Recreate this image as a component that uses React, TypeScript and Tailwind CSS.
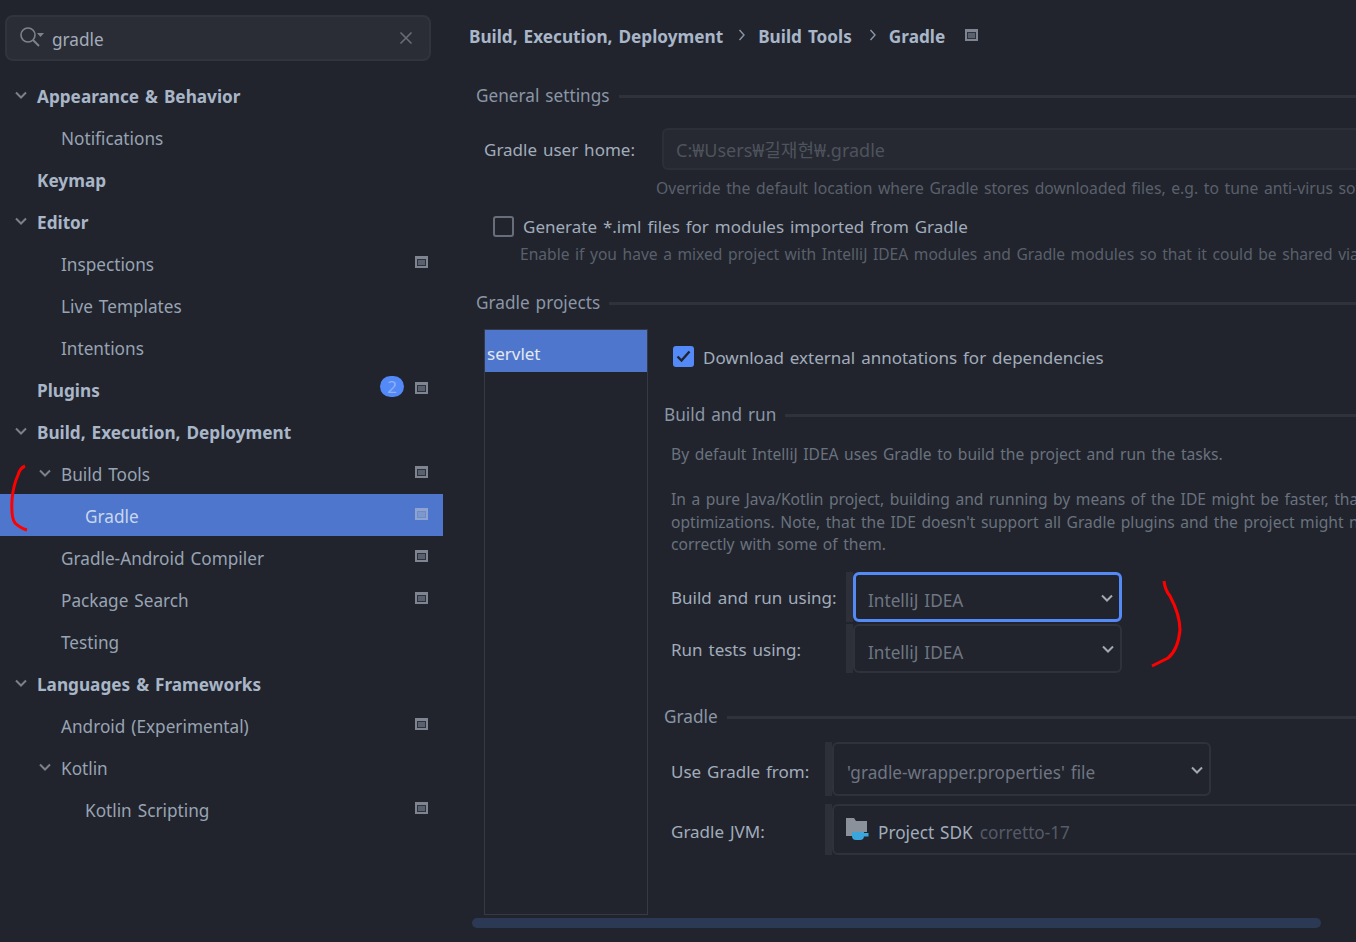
import React from "react";

const FONT = '"Noto Sans", "Noto Sans CJK KR", sans-serif';

function Chevron({ className = "" }: { className?: string }) {
  return (
    <svg width="14" height="14" viewBox="0 0 14 14" fill="none" className={className}>
      <path d="M2 4.5 L7 9.5 L12 4.5" stroke="currentColor" strokeWidth="2" />
    </svg>
  );
}

function Win({ dim = false }: { dim?: boolean }) {
  return (
    <div className={`w-[13px] h-[12px] border-2 border-t-[3px] ${dim ? "border-[#8ea3cf]" : "border-[#7f8590]"}`}>
      <div className={`w-full h-full border ${dim ? "bg-[#7d97cf] border-[#6c8bcb]" : "bg-[#596170] border-[#2e323b]"}`} />
    </div>
  );
}

type Row = { t: string; lvl: number; bold?: boolean; open?: boolean; win?: boolean; sel?: boolean; badge?: boolean };

const rows: Row[] = [
  { t: "Appearance & Behavior", lvl: 0, bold: true, open: true },
  { t: "Notifications", lvl: 1 },
  { t: "Keymap", lvl: 0, bold: true },
  { t: "Editor", lvl: 0, bold: true, open: true },
  { t: "Inspections", lvl: 1, win: true },
  { t: "Live Templates", lvl: 1 },
  { t: "Intentions", lvl: 1 },
  { t: "Plugins", lvl: 0, bold: true, win: true, badge: true },
  { t: "Build, Execution, Deployment", lvl: 0, bold: true, open: true },
  { t: "Build Tools", lvl: 1, open: true, win: true },
  { t: "Gradle", lvl: 2, win: true, sel: true },
  { t: "Gradle-Android Compiler", lvl: 1, win: true },
  { t: "Package Search", lvl: 1, win: true },
  { t: "Testing", lvl: 1 },
  { t: "Languages & Frameworks", lvl: 0, bold: true, open: true },
  { t: "Android (Experimental)", lvl: 1, win: true },
  { t: "Kotlin", lvl: 1, open: true },
  { t: "Kotlin Scripting", lvl: 2, win: true },
];

const indent = ["pl-[37px]", "pl-[61px]", "pl-[85px]"];
const chevPos = ["left-[14px]", "left-[38px]", "left-[62px]"];

function SideRow({ r }: { r: Row }) {
  return (
    <div
      className={`relative h-[42px] flex items-center pr-[15px] ${indent[r.lvl]} ${r.sel ? "bg-[#4e76cc]" : ""}`}
    >
      {r.open && <Chevron className={`absolute top-[14px] text-[#7b808a] ${chevPos[r.lvl]}`} />}
      <span
        className={`flex-1 text-[17.2px] leading-[24px] pt-[4px] whitespace-nowrap ${
          r.bold ? "font-bold text-[#a9b6c8]" : r.sel ? "text-[#c9d6ee]" : "text-[#98a3b3]"
        }`}
      >
        {r.t}
      </span>
      {r.badge && (
        <div className="w-[24px] h-[21px] mr-[11px] mb-[6px] rounded-full bg-[#548af7] text-[#8fb2f5] text-[17px] leading-[21px] text-center">
          2
        </div>
      )}
      {r.win && (
        <div className="mb-[3px]">
          <Win dim={r.sel} />
        </div>
      )}
    </div>
  );
}

function Header({ title, className = "" }: { title: string; className?: string }) {
  return (
    <div className={`flex items-center gap-[9px] h-[24px] whitespace-nowrap ${className}`}>
      <span className="text-[17.2px] leading-[24px] text-[#8b96a6] -mt-[2px]">{title}</span>
      <div className="flex-1 h-[3px] bg-[#2f323a] -mt-[1px]" />
    </div>
  );
}

function Combo({ text, w, h, focus = false }: { text: string; w: string; h: string; focus?: boolean }) {
  return (
    <div className="flex">
      <div className="w-[7px] bg-[#2d3038]" />
      <div
        className={`${w} ${h} flex items-center justify-between pr-[5px] rounded-[6px] ${
          focus ? "border-[3px] border-[#548af7] pl-[12px]" : "border-2 border-[#2f323a] pl-[13px]"
        }`}
      >
        <span className="text-[17.2px] text-[#6f7682] pt-[9px] whitespace-nowrap">{text}</span>
        <Chevron className="text-[#a3a9b3] mt-[2px]" />
      </div>
    </div>
  );
}

export default function App() {
  return (
    <div
      className="relative w-[1356px] h-[942px] overflow-hidden flex bg-[#21242d] [word-spacing:1.5px]"
      style={{ fontFamily: FONT }}
    >
      {/* sidebar */}
      <aside className="w-[443px] shrink-0">
        <div className="mx-[5px] mt-[15px] mb-[13px] w-[426px] h-[46px] rounded-[8px] bg-[#2a2d36] border-2 border-[#30343d] flex items-center pl-[12px] pr-[16px]">
          <svg width="26" height="24" viewBox="0 0 26 24" fill="none" className="text-[#7d838d]">
            <circle cx="9" cy="9" r="7" stroke="currentColor" strokeWidth="1.6" />
            <path d="M14 14 L20 20" stroke="currentColor" strokeWidth="2" />
            <path d="M18 7 H25 L21.5 11 Z" fill="currentColor" />
          </svg>
          <span className="flex-1 ml-[7px] text-[17.2px] text-[#a3acba] pt-[4px]">gradle</span>
          <svg width="14" height="14" viewBox="0 0 14 14" fill="none" className="text-[#686d77]">
            <path d="M1.5 1.5 L12.5 12.5 M12.5 1.5 L1.5 12.5" stroke="currentColor" strokeWidth="1.6" />
          </svg>
        </div>
        {rows.map((r) => (
          <SideRow key={r.t} r={r} />
        ))}
      </aside>

      {/* main */}
      <main className="flex-1 min-w-0 overflow-hidden relative">
        <div className="pl-[26px] pt-[26px] flex items-center h-[48px] whitespace-nowrap font-bold text-[17.2px] text-[#a9b6c8]">
          <span>Build, Execution, Deployment</span>
          <svg width="8" height="12" viewBox="0 0 8 12" fill="none" className="ml-[15px] mr-[12px] -mt-[5px] text-[#8b96a6]">
            <path d="M1.5 1 L6 6 L1.5 11" stroke="currentColor" strokeWidth="1.4" />
          </svg>
          <span>Build Tools</span>
          <svg width="8" height="12" viewBox="0 0 8 12" fill="none" className="ml-[17px] mr-[12px] -mt-[5px] text-[#8b96a6]">
            <path d="M1.5 1 L6 6 L1.5 11" stroke="currentColor" strokeWidth="1.4" />
          </svg>
          <span>Gradle</span>
          <div className="ml-[20px] -mt-[4px]">
            <Win />
          </div>
        </div>

        <div className="pl-[33px] w-[1100px]">
          <Header title="General settings" className="mt-[37px]" />
          <div className="mt-[19px] pl-[8px] flex items-center h-[42px]">
            <span className="w-[178px] text-[17px] text-[#a1acbb] pt-[2px] whitespace-nowrap">Gradle user home:</span>
            <div className="flex-1 h-[42px] rounded-[6px] bg-[#262931] border-2 border-[#2c2f37] pl-[12px] flex items-center text-[18px] text-[#4e535d] pt-[3px] whitespace-nowrap">
              C:₩Users₩길재현₩.gradle
            </div>
          </div>
          <p className="mt-[6px] ml-[180px] h-[24px] text-[15.7px] leading-[24px] text-[#5a606b] whitespace-nowrap">
            Override the default location where Gradle stores downloaded files, e.g. to tune anti-virus software
          </p>
          <div className="mt-[15px] ml-[17px] flex items-center h-[24px]">
            <div className="w-[21px] h-[21px] rounded-[3px] border-2 border-[#686e79] -mt-[2px]" />
            <span className="ml-[9px] text-[17px] text-[#a1acbb] whitespace-nowrap">
              Generate *.iml files for modules imported from Gradle
            </span>
          </div>
          <p className="mt-[3px] ml-[44px] h-[24px] text-[15.6px] leading-[24px] text-[#5a606b] whitespace-nowrap">
            Enable if you have a mixed project with IntelliJ IDEA modules and Gradle modules so that it could be shared via VCS
          </p>
          <Header title="Gradle projects" className="mt-[26px]" />

          <div className="mt-[13px] ml-[8px] flex">
            <div className="w-[164px] h-[586px] shrink-0 border border-[#363a44]">
              <div className="h-[42px] pl-[2px] bg-[#4e76cc] text-[17px] text-[#e3e8f2] flex items-center pt-[6px]">
                servlet
              </div>
            </div>

            <div className="flex-1 pl-[16px]">
              <div className="mt-[16px] ml-[9px] flex items-center h-[24px]">
                <div className="w-[21px] h-[21px] rounded-[3px] bg-[#548af7] flex items-center justify-center -mt-[2px]">
                  <svg width="15" height="13" viewBox="0 0 15 13" fill="none">
                    <path d="M1.5 6.5 L5.5 10.5 L13.5 1.5" stroke="#21242d" strokeWidth="2.4" />
                  </svg>
                </div>
                <span className="ml-[9px] text-[17px] text-[#a1acbb] pt-[2px] whitespace-nowrap">
                  Download external annotations for dependencies
                </span>
              </div>
              <Header title="Build and run" className="mt-[35px]" />
              <div className="mt-[15px] ml-[7px] text-[15.6px] leading-[22.5px] text-[#6a727e] whitespace-nowrap">
                <p>By default IntelliJ IDEA uses Gradle to build the project and run the tasks.</p>
                <p className="mt-[22.5px]">In a pure Java/Kotlin project, building and running by means of the IDE might be faster, thanks to</p>
                <p>optimizations. Note, that the IDE doesn't support all Gradle plugins and the project might not work</p>
                <p>correctly with some of them.</p>
              </div>

              <div className="mt-[16px] ml-[7px] flex items-center">
                <span className="w-[175px] text-[17px] text-[#a1acbb] pt-[3px] whitespace-nowrap">Build and run using:</span>
                <Combo text="IntelliJ IDEA" w="w-[269px]" h="h-[50px]" focus />
              </div>
              <div className="mt-[2px] ml-[7px] flex items-center">
                <span className="w-[175px] text-[17px] text-[#a1acbb] pt-[3px] whitespace-nowrap">Run tests using:</span>
                <Combo text="IntelliJ IDEA" w="w-[269px]" h="h-[49px]" />
              </div>

              <Header title="Gradle" className="mt-[33px]" />
              <div className="mt-[12px] ml-[7px] flex items-center">
                <span className="w-[154px] text-[17px] text-[#a1acbb] pt-[7px] whitespace-nowrap">Use Gradle from:</span>
                <Combo text="'gradle-wrapper.properties' file" w="w-[379px]" h="h-[54px]" />
              </div>
              <div className="mt-[8px] ml-[7px] flex items-center">
                <span className="w-[154px] text-[17px] text-[#a1acbb] pt-[5px] whitespace-nowrap">Gradle JVM:</span>
                <div className="flex">
                  <div className="w-[7px] bg-[#2d3038]" />
                  <div className="w-[600px] h-[51px] rounded-[6px] border-2 border-[#2f323a] pl-[11px] flex items-center whitespace-nowrap">
                    <svg width="24" height="22" viewBox="0 0 24 22">
                      <path d="M1 0 H9 L11 3 H22 V14 H9 V18 H1 Z" fill="#8b919b" />
                      <path d="M7 14 H19 V18 Q19 22 15 22 H11 Q7 22 7 18 Z M19 15 H23.5 V18.5 H19 Z" fill="#3aa6dc" />
                    </svg>
                    <span className="ml-[9px] text-[17.2px] text-[#a1acbb] pt-[7px]">Project SDK</span>
                    <span className="ml-[7px] text-[17.2px] text-[#565b66] pt-[7px]">corretto-17</span>
                  </div>
                </div>
              </div>
            </div>
          </div>
        </div>

        <div className="mx-[29px] mt-[3px] w-[849px] h-[10px] rounded-full bg-[#2b3954]" />
      </main>

      {/* hand-drawn annotations */}
      <svg className="absolute inset-0 pointer-events-none" width="1356" height="942" fill="none">
        <path
          d="M25 466 Q20 468 18 475 Q13 486 12 500 Q11 518 15 523 Q20 528 27 530"
          stroke="#ff0000"
          strokeWidth="3"
        />
        <path
          d="M1164 581 Q1165 590 1170 596 Q1180 615 1180 630 Q1178 650 1168 658 Q1160 662 1152 666"
          stroke="#ff0000"
          strokeWidth="3"
        />
      </svg>
    </div>
  );
}
